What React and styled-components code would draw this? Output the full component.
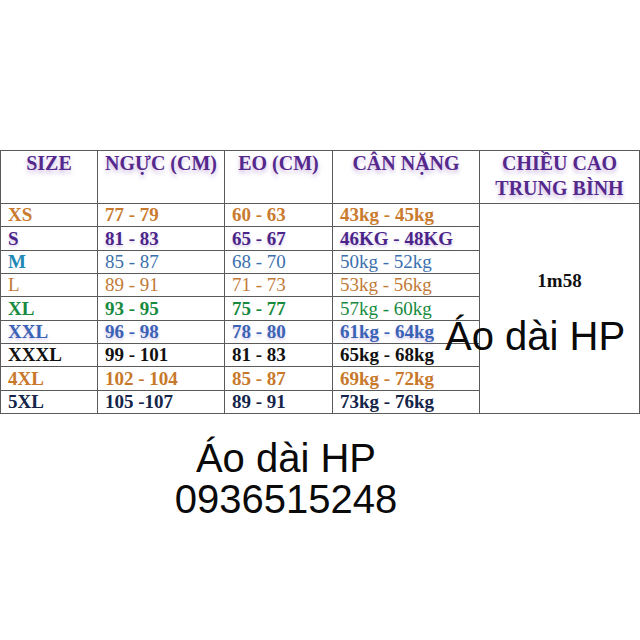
import React from 'react';
import styled, { createGlobalStyle } from 'styled-components';

const GlobalStyle = createGlobalStyle`
  html, body {
    margin: 0;
    padding: 0;
    background: #ffffff;
  }
`;

const rows = [
  { size: 'XS', chest: '77 - 79', waist: '60 - 63', weight: '43kg - 45kg', color: '#c97b2f', bold: [1, 1, 1, 1] },
  { size: 'S', chest: '81 - 83', waist: '65 - 67', weight: '46KG - 48KG', color: '#4b2488', bold: [1, 1, 1, 1], glow: true },
  { size: 'M', chest: '85 - 87', waist: '68 - 70', weight: '50kg - 52kg', color: '#3b6fae', sizeColor: '#2089b5', bold: [1, 0, 0, 0] },
  { size: 'L', chest: '89 - 91', waist: '71 - 73', weight: '53kg - 56kg', color: '#c27a38', bold: [0, 0, 0, 0] },
  { size: 'XL', chest: '93 - 95', waist: '75 - 77', weight: '57kg - 60kg', color: '#178a3e', bold: [1, 1, 1, 0] },
  { size: 'XXL', chest: '96 - 98', waist: '78 - 80', weight: '61kg - 64kg', color: '#3a62b5', bold: [1, 1, 1, 1], glow: true },
  { size: 'XXXL', chest: '99 - 101', waist: '81 - 83', weight: '65kg - 68kg', color: '#111111', bold: [1, 1, 1, 1] },
  { size: '4XL', chest: '102 - 104', waist: '85 - 87', weight: '69kg - 72kg', color: '#c8782a', bold: [1, 1, 1, 1] },
  { size: '5XL', chest: '105 -107', waist: '89 - 91', weight: '73kg - 76kg', color: '#15254a', bold: [1, 1, 1, 1] },
];

const Page = styled.div`
  padding-top: 150px;
`;

const TableWrap = styled.div`
  position: relative;
  width: 639px;
`;

const Table = styled.table`
  width: 639px;
  border-collapse: collapse;
  table-layout: fixed;
  font-family: "Liberation Serif", "Times New Roman", serif;
`;

const HeadCell = styled.th`
  height: 52px;
  padding: 0 2px;
  border: 1px solid #5a5a5a;
  vertical-align: top;
  text-align: center;
  font-size: 20px;
  line-height: 25px;
  font-weight: 700;
  color: #55288c;
  text-shadow: 0 3px 4px rgba(140, 100, 190, 0.45);
`;

const Row = styled.tr`
  height: 23.35px;
`;

const Cell = styled.td`
  padding: 0 0 0 7px;
  border: 1px solid #5a5a5a;
  font-size: 19px;
  line-height: 22px;
  white-space: nowrap;
  overflow: visible;
  color: ${p => p.$color};
  font-weight: ${p => (p.$bold ? 700 : 400)};
  text-shadow: ${p => (p.$glow ? '0 2px 3px rgba(140, 110, 200, 0.35)' : 'none')};
`;

const HeightCell = styled.td`
  border: 1px solid #5a5a5a;
  vertical-align: top;
  text-align: center;
  padding-top: 66px;
  font-size: 19px;
  font-weight: 700;
  color: #111;
`;

const Stamp = styled.div`
  position: absolute;
  left: 445px;
  top: 166px;
  font-family: "Liberation Sans", Arial, sans-serif;
  font-size: 40px;
  line-height: 40px;
  color: #0a0a0a;
  white-space: nowrap;
`;

const Contact = styled.div`
  width: 572px;
  margin-top: 24px;
  text-align: center;
  font-family: "Liberation Sans", Arial, sans-serif;
  font-size: 40px;
  line-height: 41px;
  color: #0a0a0a;
`;

export default function App() {
  return (
    <Page>
      <GlobalStyle />
      <TableWrap>
        <Table>
          <colgroup>
            <col style={{ width: 97 }} />
            <col style={{ width: 127 }} />
            <col style={{ width: 108 }} />
            <col style={{ width: 147 }} />
            <col style={{ width: 160 }} />
          </colgroup>
          <thead>
            <tr>
              <HeadCell>SIZE</HeadCell>
              <HeadCell>NGỰC (CM)</HeadCell>
              <HeadCell>EO (CM)</HeadCell>
              <HeadCell>CÂN NẶNG</HeadCell>
              <HeadCell>CHIỀU CAO<br />TRUNG BÌNH</HeadCell>
            </tr>
          </thead>
          <tbody>
            {rows.map((r, i) => (
              <Row key={r.size}>
                <Cell $color={r.sizeColor || r.color} $bold={r.bold[0]} $glow={r.glow}>{r.size}</Cell>
                <Cell $color={r.color} $bold={r.bold[1]} $glow={r.glow}>{r.chest}</Cell>
                <Cell $color={r.color} $bold={r.bold[2]} $glow={r.glow}>{r.waist}</Cell>
                <Cell $color={r.color} $bold={r.bold[3]} $glow={r.glow}>{r.weight}</Cell>
                {i === 0 && <HeightCell rowSpan={rows.length}>1m58</HeightCell>}
              </Row>
            ))}
          </tbody>
        </Table>
        <Stamp>Áo dài HP</Stamp>
      </TableWrap>
      <Contact>
        Áo dài HP<br />
        0936515248
      </Contact>
    </Page>
  );
}
